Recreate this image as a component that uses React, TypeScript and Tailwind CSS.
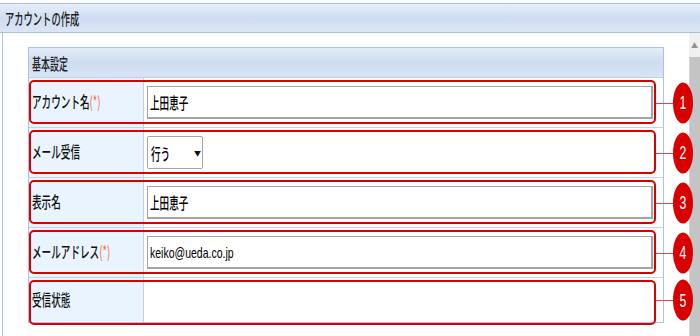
import React from "react";

const rows: { label: string; req?: boolean; kind: "input" | "select" | "none"; value?: string; last?: boolean }[] = [
  { label: "アカウント名", req: true, kind: "input", value: "上田恵子" },
  { label: "メール受信", kind: "select", value: "行う" },
  { label: "表示名", kind: "input", value: "上田恵子" },
  { label: "メールアドレス", req: true, kind: "input", value: "keiko@ueda.co.jp" },
  { label: "受信状態", kind: "none", last: true },
];

function Row({ r, n }: { r: (typeof rows)[number]; n: number }) {
  const latin = r.value && /^[a-z@.]+$/.test(r.value);
  return (
    <div className={`relative flex border-t border-[#bcd2ee] ${r.last ? "h-[45px]" : "h-[50px]"}`}>
      <div className="w-[115px] shrink-0 bg-[#eaf4fe] border-r border-[#bcd2ee] flex items-center pl-[3px] pb-[3px]">
        <span className="inline-block whitespace-nowrap origin-left scale-x-[0.6] text-[16px] leading-none font-medium text-[#111]">
          {r.label}
          {r.req && <span className="text-[#f0703c] font-normal">(*)</span>}
        </span>
      </div>
      <div className="flex-1 flex items-center pl-[3px] bg-white">
        {r.kind === "input" && (
          <div className="w-[506px] h-[33px] border border-[#a4a4a4] border-b-2 border-r-2 bg-white flex items-center pl-[2px] overflow-hidden">
            {latin ? (
              <span className="inline-block whitespace-nowrap origin-left scale-x-[0.7] text-[15px] leading-none text-[#000] font-['Liberation_Sans',sans-serif]">
                {r.value}
              </span>
            ) : (
              <span className="inline-block whitespace-nowrap origin-left scale-x-[0.6] text-[16px] leading-none font-medium text-[#000]">
                {r.value}
              </span>
            )}
          </div>
        )}
        {r.kind === "select" && (
          <div className="w-[56px] h-[33px] border border-[#a4a4a4] rounded-[2px] bg-white flex items-center pl-[3px] relative">
            <span className="inline-block whitespace-nowrap origin-left scale-x-[0.6] text-[16px] leading-none font-medium text-[#000]">
              {r.value}
            </span>
            <span className="absolute left-[46px] top-1/2 -translate-y-1/2 text-[7px] leading-none text-[#111]">▼</span>
          </div>
        )}
      </div>
      {/* annotation overlay */}
      <div className={`absolute left-0 right-[7px] top-[2px] border-2 border-[#d80000] rounded-[5px] pointer-events-none ${r.last ? "-bottom-[3px]" : "bottom-[3px]"}`} />
      <div className="absolute left-[627px] top-1/2 w-[17px] h-px bg-[#e04848]" />
      <div className="absolute left-[644px] top-1/2 -translate-y-1/2 w-[20px] h-[41px] rounded-[50%] bg-[#d80000] flex items-center justify-center z-10">
        <span className="inline-block scale-x-[0.68] text-[18px] leading-none text-white font-['Liberation_Sans',sans-serif]">{n}</span>
      </div>
    </div>
  );
}

export default function App() {
  return (
    <div className="w-[700px] h-[336px] overflow-hidden bg-white flex flex-col font-['Noto_Sans_CJK_JP',sans-serif]">
      <div className="mt-[3px] h-[30px] shrink-0 border-y border-[#a6c0e2] bg-gradient-to-b from-[#e6eef9] via-[#cfddf1] to-[#dbe6f5] flex items-center pl-[5px]">
        <span className="inline-block whitespace-nowrap origin-left scale-x-[0.58] text-[16px] leading-none font-medium text-[#222]">
          アカウントの作成
        </span>
      </div>
      <div className="flex-1 flex min-h-0">
        <div className="flex-1 ml-[2px] border-l border-[#a9c3e4] pl-[25px] pt-[14px]">
          <div className="w-[636px] border-x border-b border-[#a9c3e4]">
            <div className="h-[30px] border-t border-[#a9c3e4] bg-gradient-to-b from-[#e4edf9] via-[#cddcf0] to-[#d9e5f4] flex items-center pl-[3px]">
              <span className="inline-block whitespace-nowrap origin-left scale-x-[0.56] text-[16px] leading-none font-medium text-[#222]">
                基本設定
              </span>
            </div>
            {rows.map((r, i) => (
              <Row key={i} r={r} n={i + 1} />
            ))}
          </div>
        </div>
        <div className="w-[11px] shrink-0 flex flex-col bg-[#f0f0f0]">
          <div className="h-[24px] flex items-center justify-center">
            <span className="text-[7px] leading-none text-[#909090]">▲</span>
          </div>
          <div className="flex-1 bg-[#c4c4c4] border-l border-[#d4d4d4]" />
        </div>
      </div>
    </div>
  );
}
